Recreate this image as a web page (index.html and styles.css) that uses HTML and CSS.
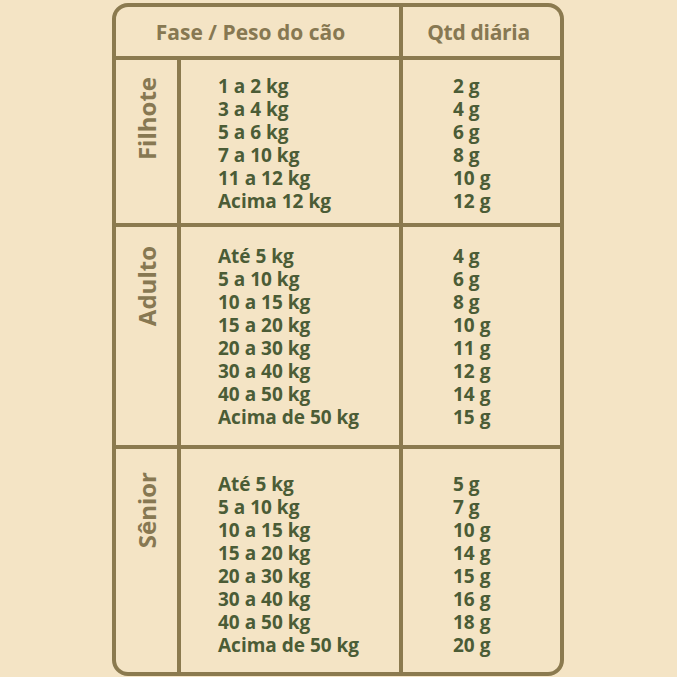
FILE: index.html
```html
<!DOCTYPE html>
<html lang="pt">
<head>
<meta charset="utf-8">
<link rel="stylesheet" href="styles.css">
</head>
<body>
<div class="table">
  <div class="cell head head-phase">Fase / Peso do cão</div>
  <div class="cell head head-qty">Qtd diária</div>

  <div class="cell stage s1"><span class="label">Filhote</span></div>
  <div class="cell list range s1">
    <div>1 a 2 kg</div><div>3 a 4 kg</div><div>5 a 6 kg</div><div>7 a 10 kg</div><div>11 a 12 kg</div><div>Acima 12 kg</div>
  </div>
  <div class="cell list qty s1">
    <div>2 g</div><div>4 g</div><div>6 g</div><div>8 g</div><div>10 g</div><div>12 g</div>
  </div>

  <div class="cell stage s2"><span class="label">Adulto</span></div>
  <div class="cell list range s2">
    <div>Até 5 kg</div><div>5 a 10 kg</div><div>10 a 15 kg</div><div>15 a 20 kg</div><div>20 a 30 kg</div><div>30 a 40 kg</div><div>40 a 50 kg</div><div>Acima de 50 kg</div>
  </div>
  <div class="cell list qty s2">
    <div>4 g</div><div>6 g</div><div>8 g</div><div>10 g</div><div>11 g</div><div>12 g</div><div>14 g</div><div>15 g</div>
  </div>

  <div class="cell stage s3"><span class="label">Sênior</span></div>
  <div class="cell list range s3">
    <div>Até 5 kg</div><div>5 a 10 kg</div><div>10 a 15 kg</div><div>15 a 20 kg</div><div>20 a 30 kg</div><div>30 a 40 kg</div><div>40 a 50 kg</div><div>Acima de 50 kg</div>
  </div>
  <div class="cell list qty s3">
    <div>5 g</div><div>7 g</div><div>10 g</div><div>14 g</div><div>15 g</div><div>16 g</div><div>18 g</div><div>20 g</div>
  </div>
</div>
</body>
</html>
```
FILE: styles.css
```css
html, body {
  margin: 0;
  padding: 0;
  background: #f4e4c5;
}
body {
  font-family: "Open Sans", "Liberation Sans", sans-serif;
  font-weight: 700;
  height: 677px;
  overflow: hidden;
}
.table {
  display: grid;
  grid-template-columns: 61px 218px 157px;
  grid-template-rows: 49px 163px 218px 223px;
  gap: 4px;
  width: max-content;
  margin: 3px 0 0 112px;
  border: 4px solid #8b7a4f;
  background: #8b7a4f;
  border-radius: 16px;
  overflow: hidden;
}
.cell {
  background: #f4e4c5;
}
.head {
  color: #877852;
  font-size: 21px;
  line-height: 49px;
  text-align: center;
  padding-top: 1px;
  box-sizing: border-box;
}
.head-phase {
  grid-column: 1 / 3;
  padding-right: 14px;
}
.head-qty {
  padding-right: 6px;
  letter-spacing: -0.3px;
}
.list {
  color: #4b5c36;
  font-size: 19px;
  line-height: 23px;
  box-sizing: border-box;
}
.range { padding-left: 37px; }
.qty { padding-left: 50px; }
.s1 { padding-top: 15px; }
.s2 { padding-top: 18px; }
.s3 { padding-top: 24px; }
.stage {
  display: flex;
  justify-content: center;
  align-items: flex-start;
  box-sizing: border-box;
}
.label {
  writing-mode: vertical-rl;
  transform: rotate(180deg);
  color: #877852;
  font-size: 24px;
  line-height: 30px;
  margin-top: 2px;
}
.s2 .label { margin-top: 1px; }
.s3 .label { margin-top: -1px; }
```
